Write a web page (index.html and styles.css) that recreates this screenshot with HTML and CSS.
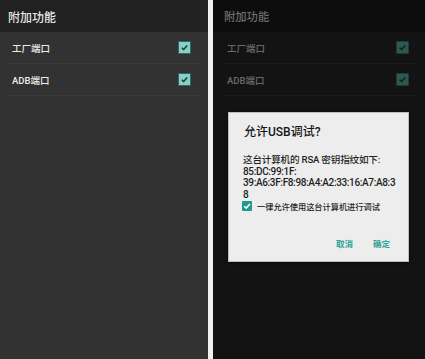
FILE: index.html
```html
<!DOCTYPE html>
<html lang="zh">
  <head>
    <meta charset="UTF-8" />
    <meta name="viewport" content="width=device-width, initial-scale=1.0" />
    <title>附加功能</title>
    <link rel="stylesheet" href="styles.css">
  </head>
  <body>
    <div class="screen screen-left">
      <div class="appbar">附加功能</div>
      <div class="list">
        <div class="row">
          <span class="label">工厂端口</span>
          <span class="check"><svg viewBox="0 0 12 12"><path d="M3 6.2 L5.1 8.2 L9 3.9" /></svg></span>
        </div>
        <div class="row">
          <span class="label">ADB端口</span>
          <span class="check"><svg viewBox="0 0 12 12"><path d="M3 6.2 L5.1 8.2 L9 3.9" /></svg></span>
        </div>
      </div>
    </div>

    <div class="screen screen-right">
      <div class="appbar">附加功能</div>
      <div class="list">
        <div class="row">
          <span class="label">工厂端口</span>
          <span class="check"><svg viewBox="0 0 12 12"><path d="M3 6.2 L5.1 8.2 L9 3.9" /></svg></span>
        </div>
        <div class="row">
          <span class="label">ADB端口</span>
          <span class="check"><svg viewBox="0 0 12 12"><path d="M3 6.2 L5.1 8.2 L9 3.9" /></svg></span>
        </div>
      </div>

      <!-- dialog sits over the dimmed list -->
      <div class="dialog">
        <div class="dialog-title">允许USB调试?</div>
        <div class="dialog-body">
          <span class="intro">这台计算机的 RSA 密钥指纹如下:</span><br>
          85:DC:99:1F:<br>
          39:A6:3F:F8:98:A4:A2:33:16:A7:A8:3<br>
          8
        </div>
        <label class="always">
          <span class="box"><svg viewBox="0 0 10 10"><path d="M2.2 5.2 L4.2 7.1 L7.9 3" /></svg></span>
          一律允许使用这台计算机进行调试
        </label>
        <div class="actions">
          <span class="btn">取消</span>
          <span class="btn">确定</span>
        </div>
      </div>
    </div>
  </body>
</html>
```

FILE: styles.css
```css
body {
  margin: 0;
  padding: 0;
  height: 359px;
  display: flex;
  gap: 5px;
  background-color: #f1f1f1;
  font-family: Roboto, "Noto Sans CJK SC", sans-serif;
  overflow: hidden;
}
.screen {
  position: relative;
  height: 100%;
}
.screen-left {
  width: 208px;
  background-color: #323232;
}
.screen-right {
  flex: 1;
  background-color: #131313;
}
.appbar {
  height: 32px;
  display: flex;
  align-items: center;
  font-size: 12px;
  font-weight: 500;
  padding-left: 8px;
  background-color: #212121;
  color: #e6e6e6;
}
.list {
  padding: 0 8px;
}
.row {
  height: 32px;
  display: flex;
  align-items: center;
  justify-content: space-between;
  border-bottom: 1px solid #3b3b3b;
  box-sizing: border-box;
  padding: 0 9px 0 4px;
}
.label {
  font-size: 9.5px;
  font-weight: 500;
  color: #ececec;
}
.check {
  width: 11px;
  height: 11px;
  border: 1px solid #2a6b64;
  background-color: #86d0c7;
  border-radius: 1px;
  display: flex;
}
.check svg {
  width: 11px;
  height: 11px;
}
.check path {
  fill: none;
  stroke: #1b3532;
  stroke-width: 1.6;
}

.screen-right .appbar {
  padding-left: 11px;
  font-size: 11.3px;
  background-color: #0d0d0d;
  color: #6f6f6f;
}
.screen-right .list {
  padding: 0 8px 0 10px;
}
.screen-right .row {
  border-bottom-color: #1a1a1a;
  padding: 0 8px 0 4px;
}
.screen-right .label {
  color: #6a6a6a;
}
.screen-right .check {
  background-color: #2e5752;
  border-color: #1d3b38;
}
.screen-right .check path {
  stroke: #0f1d1b;
}

.dialog {
  position: absolute;
  left: 15px;
  top: 112px;
  width: 181px;
  height: 150px;
  box-sizing: border-box;
  padding: 12px 14px 0 14px;
  background-color: #ededed;
  border: 1px solid #bdbdbd;
  box-shadow: 0 1px 3px rgba(0, 0, 0, 0.6);
}
.dialog-title {
  font-size: 12px;
  line-height: 14px;
  font-weight: 500;
  color: #151515;
  padding-left: 1px;
}
.dialog-body {
  margin-top: 15px;
  font-size: 10px;
  line-height: 11.5px;
  font-weight: 500;
  color: #1f1f1f;
  letter-spacing: -0.35px;
  white-space: nowrap;
}
.intro {
  font-size: 9.6px;
  letter-spacing: -0.2px;
}
.always {
  display: flex;
  align-items: center;
  gap: 5px;
  height: 12px;
  font-size: 8.2px;
  font-weight: 500;
  color: #1f1f1f;
  margin-left: -1px;
}
.box {
  width: 10px;
  height: 10px;
  background-color: #1e9a8c;
  border-radius: 1px;
  display: flex;
}
.box svg {
  width: 10px;
  height: 10px;
}
.box path {
  fill: none;
  stroke: #fff;
  stroke-width: 1.5;
}
.actions {
  margin-top: 26px;
  display: flex;
  justify-content: flex-end;
  gap: 20px;
  padding-right: 4px;
}
.btn {
  font-size: 8.5px;
  line-height: 12px;
  font-weight: 700;
  color: #2fa396;
}
```
